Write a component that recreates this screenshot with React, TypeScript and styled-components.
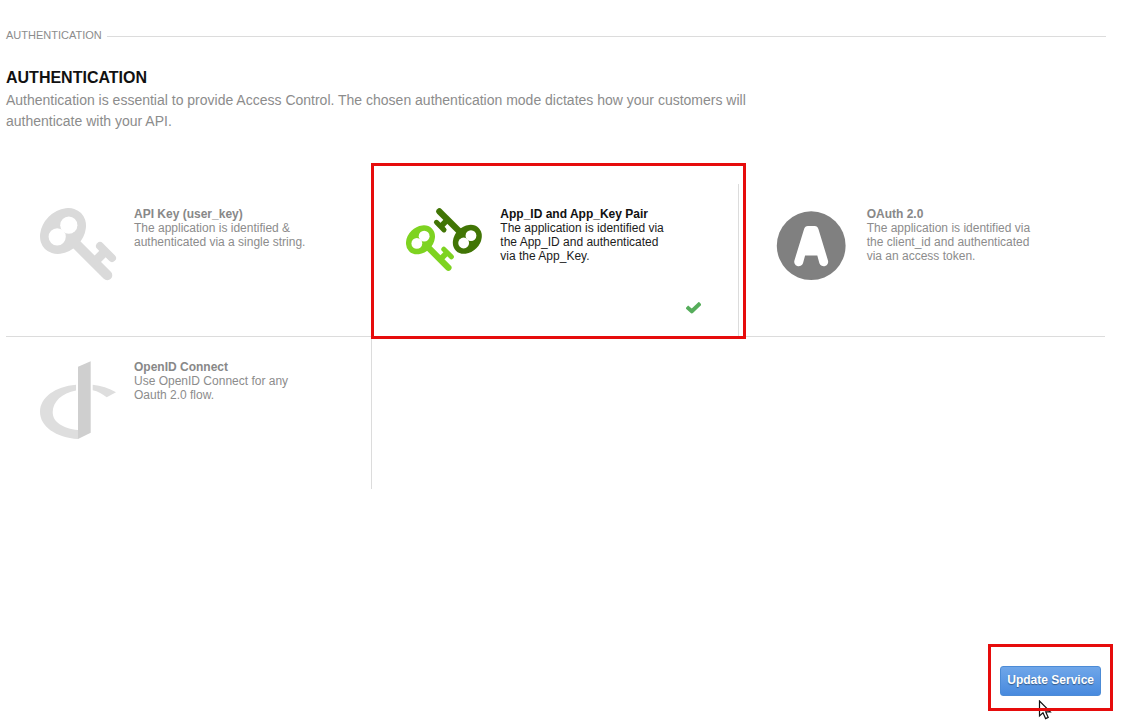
import React, { useState } from "react";
import styled, { createGlobalStyle } from "styled-components";

const GlobalStyle = createGlobalStyle`
  *, *::before, *::after { box-sizing: border-box; }
  body {
    margin: 0;
    background: #fff;
    color: #8c8c8c;
    font-family: "Liberation Sans", Arial, sans-serif;
    font-size: 12px;
  }
`;

const Page = styled.form`
  padding: 28px 23px 28px 6px;
`;

const SectionLabel = styled.div`
  display: flex;
  align-items: center;
  gap: 5px;
  font-size: 11px;
  line-height: 14px;
  text-transform: uppercase;

  &::after {
    content: "";
    flex: 1;
    margin-top: 3px;
    border-top: 1px solid #dcdcdc;
  }
`;

const Heading = styled.h2`
  margin: 26px 0 2px;
  color: #111;
  font-size: 16px;
  line-height: 20px;
  text-transform: uppercase;
`;

const Intro = styled.p`
  max-width: 760px;
  margin: 0;
  font-size: 14px;
  line-height: 21px;
`;

const Options = styled.fieldset`
  display: grid;
  grid-template-columns: repeat(3, minmax(0, 1fr));
  margin: 52px 1px 0 0;
  padding: 0;
  border: 0;
`;

const Option = styled.label<{ $selected: boolean; $right: boolean; $bottom: boolean }>`
  position: relative;
  display: flex;
  min-height: ${({ $bottom }) => ($bottom ? 153 : 152)}px;
  padding: 23px 37px 22px 34px;
  border: 0 solid #dcdcdc;
  border-right-width: ${({ $right }) => ($right ? 1 : 0)}px;
  border-bottom-width: ${({ $bottom }) => ($bottom ? 1 : 0)}px;
  color: ${({ $selected }) => ($selected ? "#1c1c1c" : "#8c8c8c")};
  cursor: pointer;
`;

const HiddenRadio = styled.input`
  position: absolute;
  width: 1px;
  height: 1px;
  margin: 0;
  opacity: 0;
`;

const OptionIcon = styled.svg`
  flex: none;
  width: 78px;
  height: 78px;
  margin: 1px 16px 0 0;
`;

const OptionText = styled.span`
  flex: 0 1 176px;
  line-height: 14px;
`;

const OptionTitle = styled.strong<{ $selected: boolean }>`
  display: block;
  color: ${({ $selected }) => ($selected ? "#111" : "#888")};
`;

const CheckMark = styled.svg`
  flex: none;
  align-self: flex-end;
  width: 15px;
  height: 12px;
  margin-left: auto;
`;

const OptionHighlight = styled.span`
  position: absolute;
  z-index: 1;
  inset: -21px -8px -3px -1px;
  border: 3px solid #e60c0c;
  pointer-events: none;
`;

const Actions = styled.div`
  display: flex;
  justify-content: flex-end;
  margin-top: 177px;
  padding-right: 5px;
`;

const SubmitArea = styled.div`
  position: relative;
`;

const SubmitButton = styled.button`
  display: block;
  height: 30px;
  padding: 0 6px 2px;
  border: 1px solid #4c8bd6;
  border-radius: 3px;
  background: linear-gradient(#6fa6e9, #488ade);
  color: #fff;
  font: bold 12px/14px "Liberation Sans", Arial, sans-serif;
  text-shadow: 0 1px 1px rgba(0, 0, 0, 0.4);
`;

const SubmitHighlight = styled.span`
  position: absolute;
  inset: -22px -12px -15px;
  border: 3px solid #e60c0c;
  pointer-events: none;
`;

const Pointer = styled.svg`
  position: absolute;
  top: 34px;
  left: 38px;
  width: 14px;
  height: 20px;
  pointer-events: none;
`;

function KeyShape({ color, transform }: { color: string; transform?: string }) {
  return (
    <g transform={transform}>
      <path
        d="M33 33 67.3 67.3"
        stroke={color}
        strokeWidth="10"
        strokeLinecap="round"
      />
      <path d="M65 43.5 53 55.5" stroke={color} strokeWidth="9" />
      <path
        d="M60 38 72 50"
        stroke={color}
        strokeWidth="8"
        strokeLinecap="round"
      />
      <ellipse cx="23" cy="23" rx="25.5" ry="20.2" fill={color} transform="rotate(-45 23 23)" />
      <circle cx="17.2" cy="28.8" r="8.6" fill="#fff" />
      <circle cx="28.8" cy="17.2" r="8.6" fill="#fff" />
    </g>
  );
}

const icons = {
  key: <KeyShape color="#dadada" />,
  pair: (
    <>
      <KeyShape color="#7ed321" transform="translate(0 17.3) scale(.63)" />
      <KeyShape color="#417505" transform="translate(75.8 45.8) scale(-.63)" />
    </>
  ),
  oauth: (
    <>
      <circle cx="38.2" cy="37.7" r="34.4" fill="#808080" />
      <path
        fill="#fff"
        transform="translate(.5 0)"
        d="M34.4 18H41.2Q44 18 44.9 21L54.4 52.2A4.5 4.5 0 0 1 45.9 55.2L43.8 47.6H31.6L29.5 55.2A4.5 4.5 0 0 1 21 52.2L30.6 21Q31.5 18 34.4 18Z"
      />
    </>
  ),
  openid: (
    <>
      <path
        fill="#dedede"
        d="M36 23.7C15 25.5 0 36.5 0 50.7 0 65.5 16 76.5 38 78V69C23 67.5 12.7 61 12.7 51.2 12.7 40.5 22 32 36 29.4Z"
      />
      <path fill="#dedede" d="M52.7 23.7C61 24.5 69 27 76 31.3L66.7 36.3C62.5 33 58 30.3 52.7 29.2Z" />
      <path fill="#cfcfcf" d="M38 5.7 50.7.3V71.7L38 78Z" />
    </>
  ),
};

const modes: { id: string; icon: keyof typeof icons; title: string; text: string }[] = [
  {
    id: "user_key",
    icon: "key",
    title: "API Key (user_key)",
    text: "The application is identified & authenticated via a single string.",
  },
  {
    id: "app_id",
    icon: "pair",
    title: "App_ID and App_Key Pair",
    text: "The application is identified via the App_ID and authenticated via the App_Key.",
  },
  {
    id: "oauth",
    icon: "oauth",
    title: "OAuth 2.0",
    text: "The application is identified via the client_id and authenticated via an access token.",
  },
  {
    id: "oidc",
    icon: "openid",
    title: "OpenID Connect",
    text: "Use OpenID Connect for any Oauth 2.0 flow.",
  },
];

export default function App() {
  const [mode, setMode] = useState("app_id");

  return (
    <>
      <GlobalStyle />
      <Page onSubmit={(event) => event.preventDefault()}>
        <SectionLabel>Authentication</SectionLabel>
        <Heading id="auth-heading">Authentication</Heading>
        <Intro>
          Authentication is essential to provide Access Control. The chosen authentication mode
          dictates how your customers will authenticate with your API.
        </Intro>

        <Options aria-labelledby="auth-heading">
          {modes.map(({ id, icon, title, text }, index) => {
            const selected = id === mode;
            return (
              <Option
                key={id}
                htmlFor={id}
                $selected={selected}
                $right={index % 3 !== 2}
                $bottom={index < 3}
              >
                <HiddenRadio
                  type="radio"
                  id={id}
                  name="auth-mode"
                  checked={selected}
                  onChange={() => setMode(id)}
                />
                <OptionIcon viewBox="0 0 78 78" fill="none" aria-hidden="true">
                  {icons[icon]}
                </OptionIcon>
                <OptionText>
                  <OptionTitle $selected={selected}>{title}</OptionTitle>
                  {text}
                </OptionText>
                {selected && (
                  <CheckMark viewBox="0 0 15 12" fill="none" aria-hidden="true">
                    <path
                      d="M2.3 6.2 5.8 9.3 12.8 2.6"
                      stroke="#56ad5b"
                      strokeWidth="4"
                      strokeLinecap="square"
                      strokeLinejoin="round"
                    />
                  </CheckMark>
                )}
                {id === "app_id" && <OptionHighlight />}
              </Option>
            );
          })}
        </Options>

        <Actions>
          <SubmitArea>
            <SubmitButton type="submit">Update Service</SubmitButton>
            <Pointer viewBox="0 0 14 20" aria-hidden="true">
              <path
                d="M1.5 1V16L5 12.8 7.6 18.6 10.2 17.4 7.7 11.8H12.3Z"
                fill="#fff"
                stroke="#111"
                strokeWidth="1.2"
              />
            </Pointer>
            <SubmitHighlight />
          </SubmitArea>
        </Actions>
      </Page>
    </>
  );
}
